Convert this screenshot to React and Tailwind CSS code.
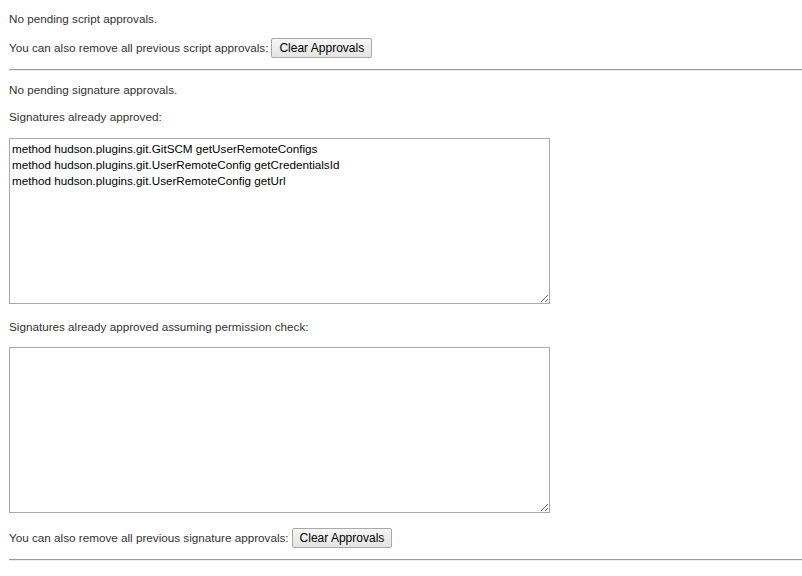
const approved = [
  "method hudson.plugins.git.GitSCM getUserRemoteConfigs",
  "method hudson.plugins.git.UserRemoteConfig getCredentialsId",
  "method hudson.plugins.git.UserRemoteConfig getUrl",
];

const font = { fontFamily: '"Liberation Sans", Arial, sans-serif' };

function ClearButton() {
  return (
    <button className="h-[20px] px-[7px] border border-[#a9a9a9] rounded-[2px] bg-gradient-to-b from-[#f6f6f6] to-[#e4e4e4] text-[12px] leading-none text-black">
      Clear Approvals
    </button>
  );
}

function Rule({ className }) {
  return <div className={`h-[2px] border-t border-[#9a9a9a] border-b border-b-[#eeeeee] ${className}`} />;
}

function Line({ className, children }) {
  return <div className={`h-[18px] leading-[18px] ${className}`}>{children}</div>;
}

export default function App() {
  return (
    <div className="bg-white min-h-[576px] pl-[9px] text-[11.7px] text-[#333]" style={font}>
      <div className="pt-[10px]">
        <Line>No pending script approvals.</Line>
        <div className="mt-[10px] h-[20px] flex items-center gap-[3px]">
          <span>You can also remove all previous script approvals:</span>
          <ClearButton />
        </div>
        <Rule className="mt-[11px]" />
      </div>

      <Line className="mt-[10px]">No pending signature approvals.</Line>
      <Line className="mt-[9px]">Signatures already approved:</Line>
      <textarea
        readOnly
        className="block mt-[12px] w-[541px] h-[166px] border border-[#a9a9a9] px-[2px] pt-[2px] text-[11.7px] leading-[16px] text-black outline-none"
        style={font}
        value={approved.join("\n")}
      />

      <Line className="mt-[14px]">Signatures already approved assuming permission check:</Line>
      <textarea
        readOnly
        className="block mt-[11px] w-[541px] h-[166px] border border-[#a9a9a9] px-[2px] pt-[2px] text-[11.7px] leading-[16px] text-black outline-none"
        style={font}
        value=""
      />

      <div className="mt-[15px] h-[20px] flex items-center gap-[3px]">
        <span>You can also remove all previous signature approvals:</span>
        <ClearButton />
      </div>
      <Rule className="mt-[11px]" />
    </div>
  );
}
